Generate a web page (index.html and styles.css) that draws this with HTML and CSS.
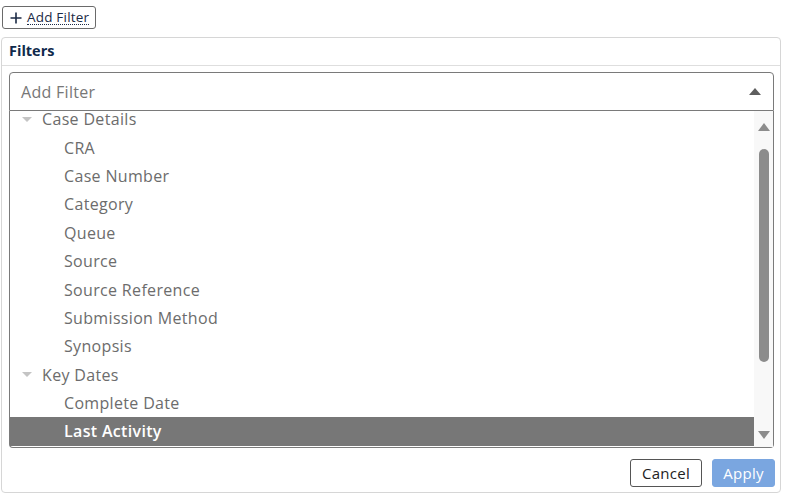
FILE: index.html
```html
<!DOCTYPE html>
<html>
<head>
<meta charset="utf-8">
<link rel="stylesheet" href="styles.css">
</head>
<body>
<div class="top">
  <button class="add-btn"><span class="plus"><svg width="12" height="12" viewBox="0 0 12 12"><path d="M6 0.5V11.5M0.5 6H11.5" stroke="#1b2a45" stroke-width="1.6"/></svg></span><span class="add-label">Add Filter</span></button>
</div>
<div class="panel">
  <div class="panel-head">Filters</div>
  <div class="panel-body">
    <div class="select">
      <span class="placeholder">Add Filter</span>
      <span class="caret"></span>
    </div>
    <div class="list">
      <div class="items">
        <div class="inner">
          <div class="row group"><span class="tri"></span>Case Details</div>
          <div class="row child">CRA</div>
          <div class="row child">Case Number</div>
          <div class="row child">Category</div>
          <div class="row child">Queue</div>
          <div class="row child">Source</div>
          <div class="row child">Source Reference</div>
          <div class="row child">Submission Method</div>
          <div class="row child">Synopsis</div>
          <div class="row group"><span class="tri"></span>Key Dates</div>
          <div class="row child">Complete Date</div>
          <div class="row child active">Last Activity</div>
        </div>
      </div>
      <div class="scrollbar">
        <span class="sb-up"></span>
        <div class="sb-track"><div class="sb-thumb"></div></div>
        <span class="sb-down"></span>
      </div>
    </div>
  </div>
  <div class="panel-foot">
    <button class="btn cancel">Cancel</button>
    <button class="btn apply">Apply</button>
  </div>
</div>
</body>
</html>
```
FILE: styles.css
```css
* { box-sizing: border-box; }
html, body { margin: 0; padding: 0; background: #fff; }
body {
  width: 786px;
  height: 498px;
  overflow: hidden;
  font-family: "Open Sans", "Liberation Sans", sans-serif;
}
.top { padding: 6px 0 0 2px; height: 37px; }
.add-btn {
  height: 23px;
  display: inline-flex;
  align-items: center;
  gap: 5px;
  padding: 0 6px 0 7px;
  border: 1px solid #6a6a6a;
  border-radius: 3px;
  background: #fff;
  font-family: inherit;
  font-size: 13.5px;
  letter-spacing: 0.2px;
  color: #1b2a45;
}
.plus { display: flex; }
.add-label { border-bottom: 1px dotted #1b2a45; line-height: 14px; }
.panel {
  margin-left: 1px;
  width: 780px;
  height: 456px;
  border: 1px solid #d6d6d6;
  border-radius: 4px;
}
.panel-head {
  height: 28px;
  padding: 3px 0 0 7px;
  font-size: 14.5px;
  font-weight: 700;
  color: #102a4c;
  border-bottom: 1px solid #dedede;
}
.panel-body { padding: 6px 6px 0 7px; }
.select {
  height: 39px;
  border: 1px solid #7a7a7a;
  border-radius: 4px 4px 0 0;
  display: flex;
  align-items: center;
  justify-content: space-between;
  padding: 0 12px 0 11px;
}
.placeholder { font-size: 16px; letter-spacing: 0.3px; color: #777; }
.caret {
  width: 0; height: 0;
  border-left: 6px solid transparent;
  border-right: 6px solid transparent;
  border-bottom: 7px solid #5e5e5e;
}
.list {
  height: 337px;
  border: 1px solid #7a7a7a;
  border-top: none;
  border-radius: 0 0 4px 4px;
  display: flex;
}
.items { flex: 1; overflow: hidden; }
.inner { margin-top: -6px; }
.row {
  height: 28.4px;
  display: flex;
  align-items: center;
  font-size: 16px;
  letter-spacing: 0.33px;
  color: #6c6c6c;
}
.group { padding-left: 12px; }
.child { padding-left: 54px; }
.tri {
  width: 0; height: 0;
  border-left: 5px solid transparent;
  border-right: 5px solid transparent;
  border-top: 5px solid #c4c4c4;
  margin-right: 10px;
}
.active { background: #777; color: #fff; font-weight: 600; }
.scrollbar {
  width: 19px;
  background: #f8f8f8;
  display: flex;
  flex-direction: column;
  align-items: center;
  padding: 12px 0 8px;
}
.sb-up, .sb-down {
  width: 0; height: 0;
  border-left: 6px solid transparent;
  border-right: 6px solid transparent;
}
.sb-up { border-bottom: 8px solid #8c8c8c; }
.sb-down { border-top: 8px solid #8c8c8c; }
.sb-track { flex: 1; width: 100%; display: flex; justify-content: center; padding-top: 18px; }
.sb-thumb { width: 10px; height: 213px; background: #8c8c8c; border-radius: 5px; }
.panel-foot {
  display: flex;
  justify-content: flex-end;
  gap: 10px;
  padding: 11px 5px 0 0;
}
.btn {
  height: 28px;
  border-radius: 3px;
  font-family: inherit;
  font-size: 15px;
  letter-spacing: 0.3px;
}
.cancel { width: 72px; border: 1px solid #555; background: #fff; color: #222; }
.apply { width: 63px; border: 1px solid #7aa6e0; background: #7aa6e0; color: #fff; }
```
